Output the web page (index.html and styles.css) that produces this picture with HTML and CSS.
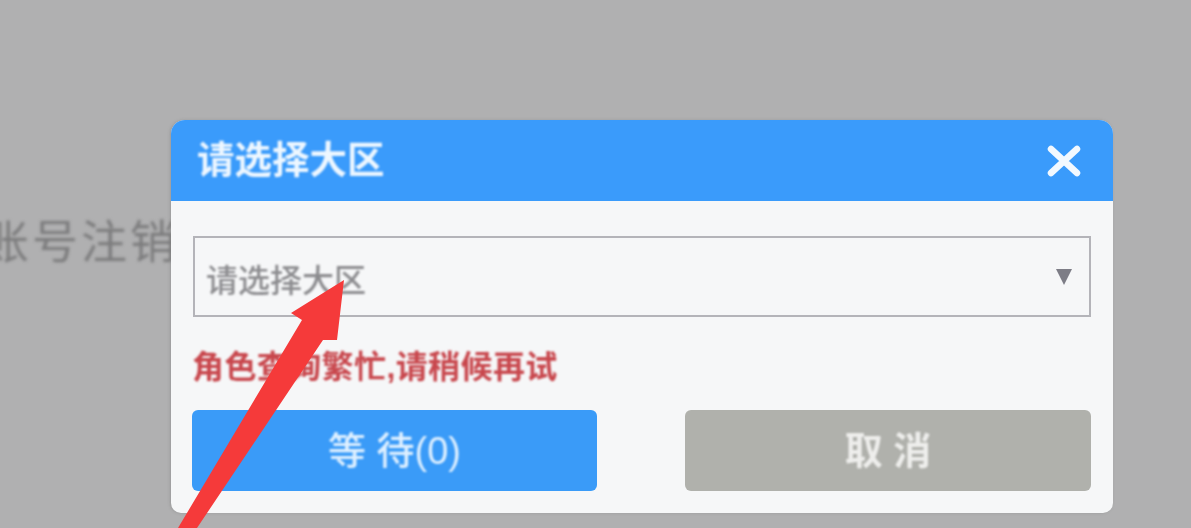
FILE: index.html
```html
<!DOCTYPE html>
<html lang="zh-CN">
<head>
<meta charset="utf-8">
<title>请选择大区</title>
<link rel="stylesheet" href="styles.css">
</head>
<body>
<main class="page">
  <p class="page-text">账号注销</p>
</main>
<section class="dialog">
  <header class="dialog-head">
    <h2 class="dialog-title">请选择大区</h2>
    <svg class="close" viewBox="0 0 34 32" width="34" height="32" aria-label="关闭">
      <path d="M4 4 L30 28 M30 4 L4 28" fill="none" stroke="#f2f9ff" stroke-width="6.5" stroke-linecap="round"/>
    </svg>
  </header>
  <div class="dialog-body">
    <div class="select">
      <span class="select-text">请选择大区</span>
      <span class="caret"></span>
    </div>
    <p class="error">角色查询繁忙,请稍候再试</p>
    <div class="actions">
      <button class="btn btn-wait"><span>等 待(0)</span></button>
      <button class="btn btn-cancel"><span>取 消</span></button>
    </div>
  </div>
</section>
<svg class="arrow" viewBox="0 0 1191 528" width="1191" height="528" aria-hidden="true">
  <path d="M344 280 L291 313 L302 320 L178 528 L197 528 L323 340 L337 340 Z" fill="#f53a3a"/>
</svg>
</body>
</html>
```

FILE: styles.css
```css
* {
  box-sizing: border-box;
}

html,
body {
  margin: 0;
  height: 528px;
  overflow: hidden;
}

body {
  background: #b0b0b1;
  font-family: "Liberation Sans", "Noto Sans CJK SC", sans-serif;
}

.page {
  height: 528px;
  padding-top: 211px;
  overflow: hidden;
}

.page-text {
  margin: 0 0 0 -17px;
  font-size: 46px;
  line-height: 62px;
  color: #7c7c7d;
  letter-spacing: 3px;
  white-space: nowrap;
  filter: blur(1.4px);
}

.dialog {
  position: absolute;
  left: 171px;
  top: 120px;
  width: 942px;
  height: 393px;
  background: #f6f7f8;
  border-radius: 14px 14px 10px 10px;
  overflow: hidden;
  box-shadow: -1px 0 3px rgba(120, 120, 120, 0.4);
}

.dialog-head {
  height: 81px;
  background: #3a9bfb;
  display: flex;
  align-items: center;
  justify-content: space-between;
  padding: 0 32px 0 26px;
}

.dialog-title {
  margin: 0;
  font-size: 37.5px;
  line-height: 1;
  font-weight: 700;
  color: #eef7ff;
  filter: blur(1px);
}

.close {
  display: block;
  filter: blur(0.6px);
}

.dialog-body {
  padding: 35px 22px 0 21px;
}

.select {
  height: 81px;
  margin-left: 1px;
  border: 2px solid #b4b4b9;
  display: flex;
  align-items: center;
  justify-content: space-between;
  padding: 0 17px 0 11px;
}

.select-text {
  font-size: 32px;
  line-height: 1;
  font-weight: 500;
  color: #8c8c8f;
  filter: blur(1.1px);
  position: relative;
  top: 4px;
}

.caret {
  width: 0;
  height: 0;
  border-left: 8px solid transparent;
  border-right: 8px solid transparent;
  border-top: 16px solid #7d7d86;
  filter: blur(0.6px);
}

.error {
  margin: 28px 0 0;
  font-size: 32px;
  line-height: 44px;
  letter-spacing: 0.4px;
  font-weight: 700;
  color: #c8474d;
  white-space: nowrap;
  filter: blur(1.1px);
}

.actions {
  display: flex;
  justify-content: space-between;
  margin-top: 21px;
}

.btn {
  width: 406px;
  height: 81px;
  border: 0;
  border-radius: 6px;
  padding: 0;
  font-family: inherit;
  font-size: 38px;
  line-height: 1;
  font-weight: 500;
  color: #dff0ff;
  display: flex;
  align-items: center;
  justify-content: center;
}

.btn span {
  filter: blur(0.9px);
  white-space: pre;
}

.btn-wait {
  width: 405px;
  background: #3a9bf8;
}

.btn-cancel {
  background: #b0b1ac;
  color: #eeeeec;
  font-weight: 700;
}

.arrow {
  position: absolute;
  left: 0;
  top: 0;
  filter: blur(0.6px);
}
```
